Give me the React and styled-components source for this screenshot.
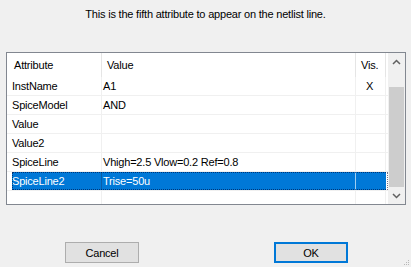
import React from "react";
import styled, { createGlobalStyle } from "styled-components";

const Global = createGlobalStyle`
  html, body { margin: 0; padding: 0; background: #f0f0f0; }
  body { font-family: "Liberation Sans", Arial, sans-serif; font-size: 11px; color: #000; letter-spacing: -0.2px; }
`;

const Dialog = styled.div`
  position: relative;
  width: 411px;
  height: 267px;
  background: #f0f0f0;
  display: flex;
  flex-direction: column;
  overflow: hidden;
`;

const Message = styled.div`
  height: 52px;
  box-sizing: border-box;
  padding-top: 7px;
  text-align: center;
  line-height: 14px;
`;

const List = styled.div`
  margin-left: 6px;
  width: 400px;
  height: 153px;
  box-sizing: border-box;
  border: 1px solid #828790;
  background: #fff;
  display: flex;
`;

const Grid = styled.div`
  flex: 1;
  display: flex;
  flex-direction: column;
`;

const COLS = "95px 254px 30px";

const HeaderRow = styled.div`
  display: grid;
  grid-template-columns: ${COLS};
  height: 24px;
`;

const HeaderCell = styled.div`
  border-right: 1px solid #e5e5e5;
  padding-left: ${(p) => p.$pad}px;
  line-height: 24px;
  white-space: nowrap;
`;

const Row = styled.div`
  position: relative;
  display: grid;
  grid-template-columns: ${COLS};
  height: 19px;
  box-sizing: border-box;
  border-bottom: 1px solid #f0f0f0;
  color: ${(p) => (p.$sel ? "#fff" : "#000")};
  ${(p) =>
    p.$sel &&
    `&::after {
      content: "";
      position: absolute;
      left: 5px; right: 0; top: 0; bottom: 0;
      border: 1px dotted rgba(0,0,40,0.55);
      pointer-events: none;
    }`}
`;

const Cell = styled.div`
  box-sizing: border-box;
  border-right: 1px solid ${(p) => (p.$sel ? p.$sepSel : "#f0f0f0")};
  padding-left: ${(p) => p.$pad}px;
  line-height: 18px;
  white-space: nowrap;
  overflow: hidden;
  background: ${(p) => (p.$sel ? "#0078d7" : "transparent")};
  background-clip: ${(p) => (p.$indent ? "content-box" : "border-box")};
  ${(p) => p.$indent && `padding-left: 5px;`}
`;

const Filler = styled.div`
  flex: 1;
  display: grid;
  grid-template-columns: ${COLS};
`;

const FillCell = styled.div`
  border-right: 1px solid #f0f0f0;
`;

const ScrollBar = styled.div`
  width: 17px;
  display: flex;
  flex-direction: column;
  background: #f0f0f0;
`;

const Arrow = styled.div`
  height: 17px;
  display: flex;
  align-items: center;
  justify-content: center;
`;

const Track = styled.div`
  flex: 1;
  padding: 17px 1px 0 1px;
`;

const Thumb = styled.div`
  height: 100px;
  background: #cdcdcd;
`;

const Footer = styled.div`
  display: flex;
  padding-left: 65px;
  gap: 135px;
  margin-top: 37px;
`;

const Button = styled.button`
  width: 74px;
  height: 21px;
  box-sizing: border-box;
  background: #e1e1e1;
  border: ${(p) => (p.$default ? "2px solid #0078d7" : "1px solid #adadad")};
  font-family: inherit;
  font-size: 11px;
  letter-spacing: -0.2px;
  color: #000;
  padding: 0;
  margin: 0;
`;

const Grip = styled.svg`
  position: absolute;
  right: 1px;
  bottom: 1px;
`;

const rows = [
  ["InstName", "A1", "X"],
  ["SpiceModel", "AND", ""],
  ["Value", "", ""],
  ["Value2", "", ""],
  ["SpiceLine", "Vhigh=2.5 Vlow=0.2 Ref=0.8", ""],
  ["SpiceLine2", "Trise=50u", ""],
];

const Chevron = ({ up }) => (
  <svg width="9" height="6" viewBox="0 0 9 6">
    <path
      d={up ? "M1 5 L4.5 1.5 L8 5" : "M1 1 L4.5 4.5 L8 1"}
      fill="none"
      stroke="#606060"
      strokeWidth="1.5"
    />
  </svg>
);

export default function App() {
  return (
    <>
      <Global />
      <Dialog>
        <Message>This is the fifth attribute to appear on the netlist line.</Message>
        <List>
          <Grid>
            <HeaderRow>
              <HeaderCell $pad={7}>Attribute</HeaderCell>
              <HeaderCell $pad={5}>Value</HeaderCell>
              <HeaderCell $pad={5}>Vis.</HeaderCell>
            </HeaderRow>
            {rows.map(([a, v, x], i) => {
              const sel = i === 5;
              return (
                <Row key={a} $sel={sel}>
                  <Cell $sel={sel} $sepSel="#0a5ea8" $indent>
                    {a}
                  </Cell>
                  <Cell $sel={sel} $sepSel="#9fcdf0" $pad={1}>
                    {v}
                  </Cell>
                  <Cell $sel={sel} $sepSel="#0078d7" $pad={10}>
                    {x}
                  </Cell>
                </Row>
              );
            })}
            <Filler>
              <FillCell />
              <FillCell />
              <FillCell />
            </Filler>
          </Grid>
          <ScrollBar>
            <Arrow>
              <Chevron up />
            </Arrow>
            <Track>
              <Thumb />
            </Track>
            <Arrow>
              <Chevron />
            </Arrow>
          </ScrollBar>
        </List>
        <Footer>
          <Button>Cancel</Button>
          <Button $default>OK</Button>
        </Footer>
        <Grip width="6" height="6" viewBox="0 0 6 6">
          <rect x="4" y="0" width="1" height="1" fill="#b8b8b8" />
          <rect x="2" y="2" width="1" height="1" fill="#b8b8b8" />
          <rect x="4" y="2" width="1" height="1" fill="#b8b8b8" />
          <rect x="0" y="4" width="1" height="1" fill="#b8b8b8" />
          <rect x="2" y="4" width="1" height="1" fill="#b8b8b8" />
          <rect x="4" y="4" width="1" height="1" fill="#b8b8b8" />
        </Grip>
      </Dialog>
    </>
  );
}
